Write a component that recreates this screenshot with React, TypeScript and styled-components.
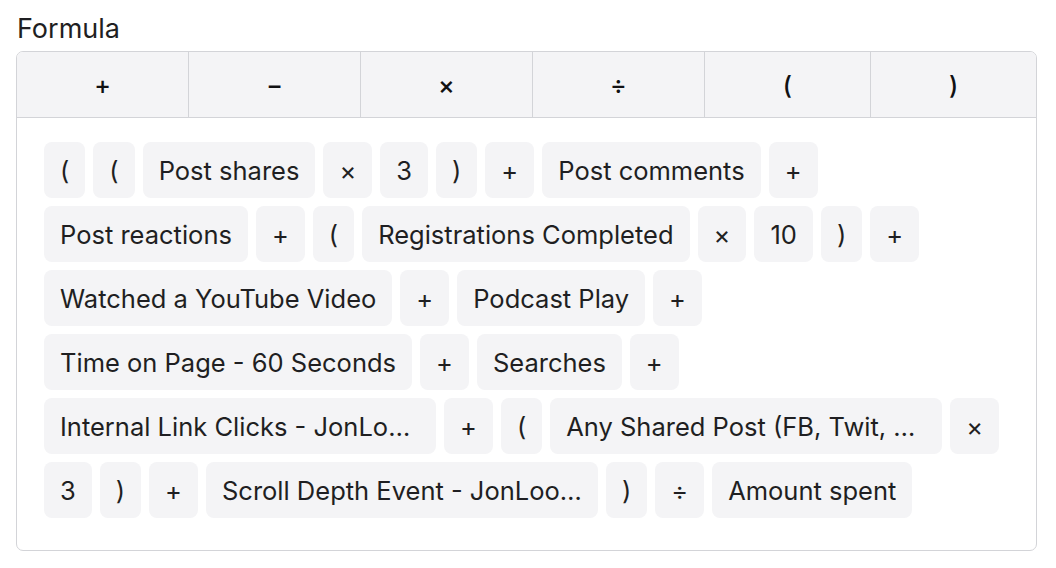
import React from 'react';
import styled, {createGlobalStyle} from 'styled-components';

// -----------------------------------------------------------------------------

const OPERATORS = ['+', '−', '×', '÷', '(', ')'];

const TOKENS = [
  '(', '(', 'Post shares', '×', '3', ')', '+', 'Post comments', '+',
  'Post reactions', '+', '(', 'Registrations Completed', '×', '10', ')', '+',
  'Watched a YouTube Video', '+', 'Podcast Play', '+',
  'Time on Page - 60 Seconds', '+', 'Searches', '+',
  'Internal Link Clicks - JonLoomer.com', '+', '(',
  'Any Shared Post (FB, Twit, LinkedIn)', '×',
  '3', ')', '+', 'Scroll Depth Event - JonLoomer.com', ')', '÷', 'Amount spent'
];

// -----------------------------------------------------------------------------

const GlobalStyle = createGlobalStyle`
  body {
    margin: 0;
    background: #ffffff;
    font-family: Inter, 'Noto Sans', sans-serif;
    color: #1f1f22;
  }
`;

const $Page = styled.div`
  padding: 12px 19px 16px 16px;
`;

const $Label = styled.div`
  font-size: 27px;
  line-height: 34px;
  margin-bottom: 5px;
  padding-left: 1px;
`;

const $Box = styled.div`
  border: 1.5px solid #d3d4d8;
  border-radius: 7px;
  overflow: hidden;
`;

const $Toolbar = styled.div`
  display: flex;
  height: 65px;
  background: #f4f4f6;
  border-bottom: 1.5px solid #d3d4d8;
`;

const $OpButton = styled.button<{$narrow?: boolean}>`
  flex: ${(p) => (p.$narrow ? '166' : '172')} 1 0;
  display: flex;
  align-items: center;
  justify-content: center;
  border: 0;
  border-left: 1.5px solid #d3d4d8;
  background: transparent;
  font-family: Inter, 'Noto Sans', sans-serif;
  font-size: 25px;
  font-weight: 500;
  color: #111113;
  padding: 0;
  cursor: pointer;

  &:first-child {
    border-left: 0;
  }
`;

const $Tokens = styled.div`
  display: flex;
  flex-wrap: wrap;
  gap: 8px;
  padding: 24px 24px 32px 27px;
`;

const $Token = styled.span`
  height: 56px;
  max-width: 392px;
  box-sizing: border-box;
  padding: 0 16px;
  display: inline-flex;
  align-items: center;
  background: #f4f4f6;
  border-radius: 8px;
  font-size: 25.5px;
  color: #1f1f22;
  white-space: nowrap;
`;

const $TokenText = styled.span`
  overflow: hidden;
  text-overflow: ellipsis;
  white-space: nowrap;
`;

// -----------------------------------------------------------------------------

const App = () => (
  <$Page>
    <GlobalStyle />
    <$Label>Formula</$Label>
    <$Box>
      <$Toolbar>
        {OPERATORS.map((op) => (
          <$OpButton key={op} $narrow={op === '(' || op === ')'}>
            {op}
          </$OpButton>
        ))}
      </$Toolbar>
      <$Tokens>
        {TOKENS.map((t, i) => (
          <$Token key={i}>
            <$TokenText>{t}</$TokenText>
          </$Token>
        ))}
      </$Tokens>
    </$Box>
  </$Page>
);

// -----------------------------------------------------------------------------

export default App;
